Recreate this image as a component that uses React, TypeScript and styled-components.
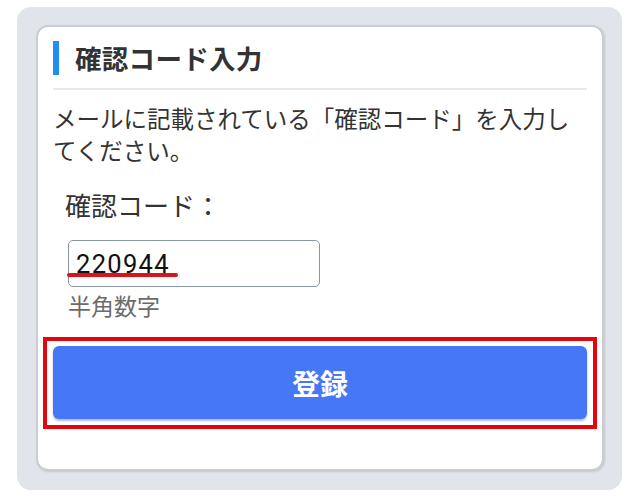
import React from "react";
import styled, { createGlobalStyle } from "styled-components";

const Global = createGlobalStyle`
  html, body { margin: 0; padding: 0; background: #ffffff; }
  body { font-family: "Noto Sans CJK JP", "Noto Sans", sans-serif; color: #333; }
  * { box-sizing: border-box; }
`;

const Panel = styled.div`
  margin: 7px 18px 8px 17px;
  height: 483px;
  background: #e1e4ea;
  border-radius: 14px;
  padding: 18px 18px 19px 19px;
  display: flex;
`;

const Card = styled.div`
  flex: 1;
  background: #ffffff;
  border: 2px solid #c9ccd1;
  border-radius: 12px;
  box-shadow: 1px 1px 2px rgba(0, 0, 0, 0.12);
  padding: 14px 15px 0 15px;
  display: flex;
  flex-direction: column;
`;

const TitleRow = styled.div`
  display: flex;
  align-items: center;
  gap: 16px;
  height: 34px;
`;

const Accent = styled.span`
  width: 6px;
  height: 34px;
  background: #1d8ff0;
`;

const Title = styled.h2`
  margin: 0;
  font-size: 26.5px;
  font-weight: 700;
  color: #333;
  line-height: 34px;
  letter-spacing: 0.3px;
`;

const Divider = styled.div`
  margin-top: 13px;
  height: 2px;
  background: #e8e8e8;
`;

const Lead = styled.p`
  margin: 12px 0 0 0;
  font-size: 23.5px;
  line-height: 32px;
  color: #333;
`;

const Field = styled.div`
  margin-top: 22px;
  padding-left: 12px;
  display: flex;
  flex-direction: column;
  align-items: flex-start;
`;

const Label = styled.label`
  font-size: 26px;
  line-height: 34px;
  color: #333;
`;

const InputWrap = styled.div`
  position: relative;
  margin-top: 18px;
  margin-left: 3px;
`;

const CodeInput = styled.input`
  width: 252px;
  height: 47px;
  border: 1.5px solid #8696a8;
  border-radius: 5px;
  padding: 0 0 0 7px;
  font-family: Roboto, "Noto Sans", sans-serif;
  font-size: 25.5px;
  letter-spacing: 1.3px;
  color: #111;
  background: #fff;
  outline: none;
`;

const Underline = styled.span`
  position: absolute;
  left: -1px;
  top: 33px;
  width: 111px;
  height: 4px;
  background: #d9141b;
  border-radius: 2px;
`;

const Hint = styled.div`
  margin-top: 4px;
  margin-left: 3px;
  font-size: 23px;
  line-height: 28px;
  color: #6b6b6b;
`;

const Highlight = styled.div`
  margin: 18px -10px 0 -10px;
  border: 4px solid #e3060f;
  padding: 5px 6px 6px 6px;
`;

const Submit = styled.button`
  width: 100%;
  height: 73px;
  border: none;
  border-radius: 6px;
  background: #4677f6;
  box-shadow: 0 2px 2px rgba(40, 60, 120, 0.35);
  color: #fff;
  font-family: "Noto Sans CJK JP", "Noto Sans", sans-serif;
  font-size: 28px;
  font-weight: 700;
  cursor: pointer;
`;

export default function App() {
  return (
    <>
      <Global />
      <Panel>
        <Card>
          <TitleRow>
            <Accent />
            <Title>確認コード入力</Title>
          </TitleRow>
          <Divider />
          <Lead>メールに記載されている「確認コード」を入力してください。</Lead>
          <Field>
            <Label htmlFor="code">確認コード：</Label>
            <InputWrap>
              <CodeInput id="code" defaultValue="220944" readOnly />
              <Underline />
            </InputWrap>
            <Hint>半角数字</Hint>
          </Field>
          <Highlight>
            <Submit type="button">登録</Submit>
          </Highlight>
        </Card>
      </Panel>
    </>
  );
}
